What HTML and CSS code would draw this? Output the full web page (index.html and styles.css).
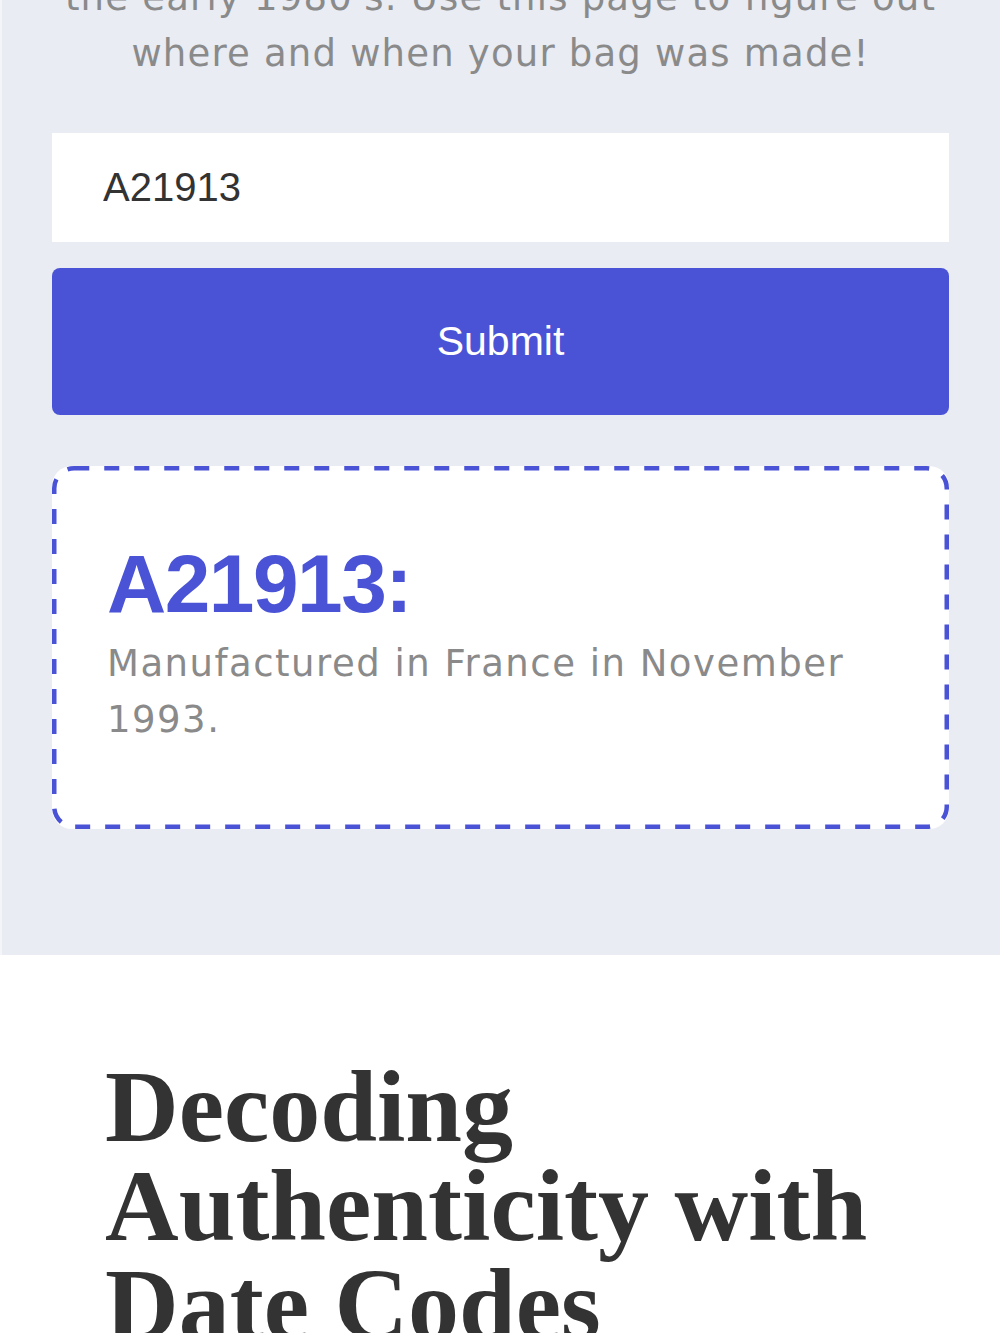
FILE: index.html
```html
<!DOCTYPE html>
<html lang="en">
<head>
    <meta charset="UTF-8">
    <meta name="viewport" content="width=device-width, initial-scale=1.0">
    <title>Date Code Lookup</title>
    <link rel="stylesheet" href="styles.css">
</head>
<body>
    <section class="lookup">
        <p class="intro">the early 1980's. Use this page to figure out where and when your bag was made!</p>

        <form class="lookup-form" onsubmit="return false;">
            <input type="text" class="code-input" value="A21913">
            <button type="submit" class="submit-btn">Submit</button>
        </form>

        <div class="result">
            <svg class="result-border" width="897" height="363" viewBox="0 0 897 363">
                <rect x="2.25" y="2.25" width="892.5" height="358.5" rx="20" ry="20"
                      fill="none" stroke="#4a53d6" stroke-width="4.5" stroke-dasharray="15 15"/>
            </svg>
            <h2 class="result-code">A21913:</h2>
            <p class="result-text">Manufactured in France in November 1993.</p>
        </div>
    </section>

    <section class="article">
        <h1 class="article-title">Decoding Authenticity with Date Codes</h1>
    </section>
</body>
</html>
```

FILE: styles.css
```css
body {
    margin: 0;
    background: #fff;
    font-family: "DejaVu Sans", "Open Sans", sans-serif;
}
.lookup {
    background: #e9ecf3;
    border-left: 2px solid #f4f5f9;
    padding: 0 51px 126px 50px;
}
.intro {
    margin: -30px 0 51px;
    padding: 0 10px;
    text-align: center;
    font-size: 37px;
    line-height: 56px;
    letter-spacing: 1.2px;
    color: #8a8a8a;
}
.lookup-form {
    display: flex;
    flex-direction: column;
    gap: 26px;
}
.code-input {
    height: 109px;
    border: none;
    background: #fff;
    padding: 0 51px;
    font-family: "Liberation Sans", Arial, sans-serif;
    font-size: 40px;
    color: #333;
    box-sizing: border-box;
    outline: none;
}
.submit-btn {
    height: 147px;
    border: none;
    border-radius: 8px;
    background: #4a53d6;
    color: #fff;
    font-family: "Liberation Sans", Arial, sans-serif;
    font-size: 41px;
    cursor: pointer;
}
.result {
    position: relative;
    margin-top: 51px;
    height: 363px;
    box-sizing: border-box;
    border-radius: 20px;
    background: #fff;
    padding: 69px 55px 0;
}
.result-border {
    position: absolute;
    top: 0;
    left: 0;
}
.result-code {
    margin: 0;
    font-family: "Liberation Sans", Arial, sans-serif;
    font-weight: bold;
    font-size: 82px;
    line-height: 98px;
    letter-spacing: -1.5px;
    color: #4a53d6;
}
.result-text {
    margin: 3px 0 0;
    font-size: 37px;
    line-height: 56px;
    letter-spacing: 1.5px;
    color: #8a8a8a;
}
.article {
    padding: 102px 40px 0 105px;
}
.article-title {
    margin: 0;
    font-family: "Liberation Serif", "Times New Roman", serif;
    font-weight: bold;
    font-size: 102px;
    line-height: 99px;
    color: #333;
}
```
